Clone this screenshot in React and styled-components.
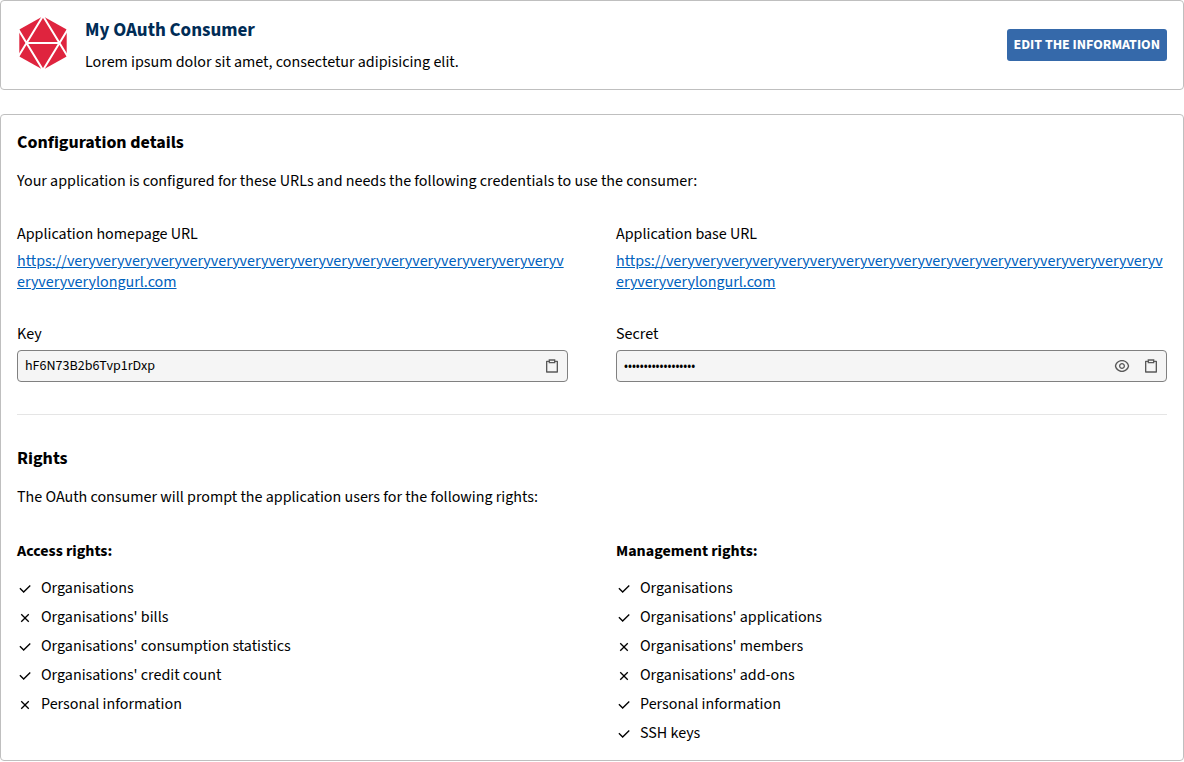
import React, { useState } from 'react';
import styled, { createGlobalStyle } from 'styled-components';
import { RiCheckLine, RiCloseLine, RiClipboardLine, RiEyeLine } from 'react-icons/ri';

const GlobalStyle = createGlobalStyle`
  *, *::before, *::after { box-sizing: border-box; }
  body {
    margin: 0;
    background: #fff;
    color: #000;
    font-family: 'Source Sans 3', 'Noto Sans CJK SC', sans-serif;
    font-size: 16px;
    line-height: 21px;
  }
  h1, h2, h3, p, ul { margin: 0; padding: 0; }
`;

const Page = styled.main`
  display: grid;
  gap: 24px;
`;

const Card = styled.section`
  padding: 16px;
  border: 1px solid #bfbfbf;
  border-radius: 4px;
  background: #fff;
`;

const HeaderCard = styled(Card)`
  display: flex;
  gap: 16px;
`;

const Logo = styled.svg`
  flex: none;
  width: 52px;
  height: 52px;
`;

const HeaderText = styled.div`
  flex: 1;
  display: grid;
  gap: 8px;
`;

const Name = styled.h1`
  font-size: 19px;
  line-height: 27px;
  font-weight: 700;
  color: #002c56;
`;

const EditButton = styled.button`
  align-self: center;
  height: 32px;
  padding: 0 7px;
  border: 0;
  border-radius: 3px;
  background: #3569aa;
  color: #fff;
  font: 700 14px/16px 'Source Sans 3', 'Noto Sans CJK SC', sans-serif;
  text-transform: uppercase;
  cursor: pointer;
`;

const DetailsCard = styled(Card)`
  display: grid;
  gap: 32px;
`;

const Intro = styled.div`
  display: grid;
  gap: 17px;
`;

const Title = styled.h2`
  font-size: 18px;
  line-height: 23px;
  font-weight: 700;
`;

const Columns = styled.div`
  display: grid;
  grid-template-columns: repeat(2, minmax(0, 1fr));
  gap: 31px 48px;
`;

const Entry = styled.div`
  display: grid;
  gap: 6px;
`;

const Link = styled.a`
  color: #0061bd;
  word-break: break-all;
`;

const Field = styled.div`
  display: grid;
  gap: 5px;
`;

const InputBox = styled.div`
  display: flex;
  align-items: center;
  gap: 5px;
  height: 32px;
  padding: 0 3px 0 7px;
  border: 1px solid #808080;
  border-radius: 4px;
  background: #f5f5f5;
`;

const Input = styled.input`
  flex: 1;
  min-width: 0;
  padding: 0;
  border: 0;
  outline: 0;
  background: transparent;
  color: #000;
  font-family: inherit;
  font-size: ${({ type }) => (type === 'password' ? '13px' : '14px')};
  line-height: 24px;
`;

const IconButton = styled.button`
  display: grid;
  place-items: center;
  width: 24px;
  height: 24px;
  padding: 0;
  border: 0;
  background: transparent;
  color: #595959;
  font-size: 16px;
  cursor: pointer;
`;

const Divider = styled.hr`
  width: 100%;
  height: 1px;
  margin: 0;
  border: 0;
  background: #e5e5e5;
`;

const Rights = styled.div`
  display: grid;
  align-content: start;
  gap: 15px;
`;

const RightsTitle = styled.h3`
  font-size: 16px;
  line-height: 23px;
  font-weight: 700;
`;

const RightsList = styled.ul`
  display: grid;
  gap: 8px;
  list-style: none;
`;

const Right = styled.li`
  display: flex;
  align-items: center;
  gap: 8px;

  svg {
    flex: none;
    width: 16px;
    height: 16px;
  }
`;

const longUrl = `https://${'very'.repeat(20)}longurl.com`;

const accessRights = [
  ['Organisations', true],
  ["Organisations' bills", false],
  ["Organisations' consumption statistics", true],
  ["Organisations' credit count", true],
  ['Personal information', false],
];

const managementRights = [
  ['Organisations', true],
  ["Organisations' applications", true],
  ["Organisations' members", false],
  ["Organisations' add-ons", false],
  ['Personal information', true],
  ['SSH keys', true],
];

function ConsumerLogo() {
  return (
    <Logo viewBox="0 0 52 52" role="img" aria-label="Consumer logo">
      <path d="M24.7 0H27.3L49.7 12.6V39.4L27.3 52H24.7L2.3 39.4V12.6Z" fill="#df243e" />
      <path
        d="M26 -1 1 40M26 -1 51 40M26 53 1 12M26 53 51 12M10 26H42"
        fill="none"
        stroke="#fff"
        strokeWidth="2"
      />
    </Logo>
  );
}

function CredentialField({ id, label, value, secret }) {
  const [shown, setShown] = useState(!secret);
  return (
    <Field>
      <label htmlFor={id}>{label}</label>
      <InputBox>
        <Input id={id} type={shown ? 'text' : 'password'} value={value} readOnly />
        {secret && (
          <IconButton type="button" aria-label="Show secret" onClick={() => setShown(!shown)}>
            <RiEyeLine />
          </IconButton>
        )}
        <IconButton
          type="button"
          aria-label={`Copy ${label}`}
          onClick={() => navigator.clipboard.writeText(value)}
        >
          <RiClipboardLine />
        </IconButton>
      </InputBox>
    </Field>
  );
}

function RightsGroup({ title, rights }) {
  return (
    <Rights>
      <RightsTitle>{title}</RightsTitle>
      <RightsList>
        {rights.map(([name, granted]) => (
          <Right key={name}>
            {granted ? <RiCheckLine /> : <RiCloseLine />}
            <span>{name}</span>
          </Right>
        ))}
      </RightsList>
    </Rights>
  );
}

export default function App() {
  return (
    <>
      <GlobalStyle />
      <Page>
        <HeaderCard>
          <ConsumerLogo />
          <HeaderText>
            <Name>My OAuth Consumer</Name>
            <p>Lorem ipsum dolor sit amet, consectetur adipisicing elit.</p>
          </HeaderText>
          <EditButton type="button">Edit the information</EditButton>
        </HeaderCard>

        <DetailsCard>
          <Intro>
            <Title>Configuration details</Title>
            <p>Your application is configured for these URLs and needs the following credentials to use the consumer:</p>
          </Intro>
          <Columns>
            <Entry>
              <span>Application homepage URL</span>
              <Link href={longUrl}>{longUrl}</Link>
            </Entry>
            <Entry>
              <span>Application base URL</span>
              <Link href={longUrl}>{longUrl}</Link>
            </Entry>
            <CredentialField id="key" label="Key" value="hF6N73B2b6Tvp1rDxp" />
            <CredentialField id="secret" label="Secret" value="aX4kP9sL2qWm7RtYz8" secret />
          </Columns>
          <Divider />
          <Intro>
            <Title>Rights</Title>
            <p>The OAuth consumer will prompt the application users for the following rights:</p>
          </Intro>
          <Columns>
            <RightsGroup title="Access rights:" rights={accessRights} />
            <RightsGroup title="Management rights:" rights={managementRights} />
          </Columns>
        </DetailsCard>
      </Page>
    </>
  );
}
